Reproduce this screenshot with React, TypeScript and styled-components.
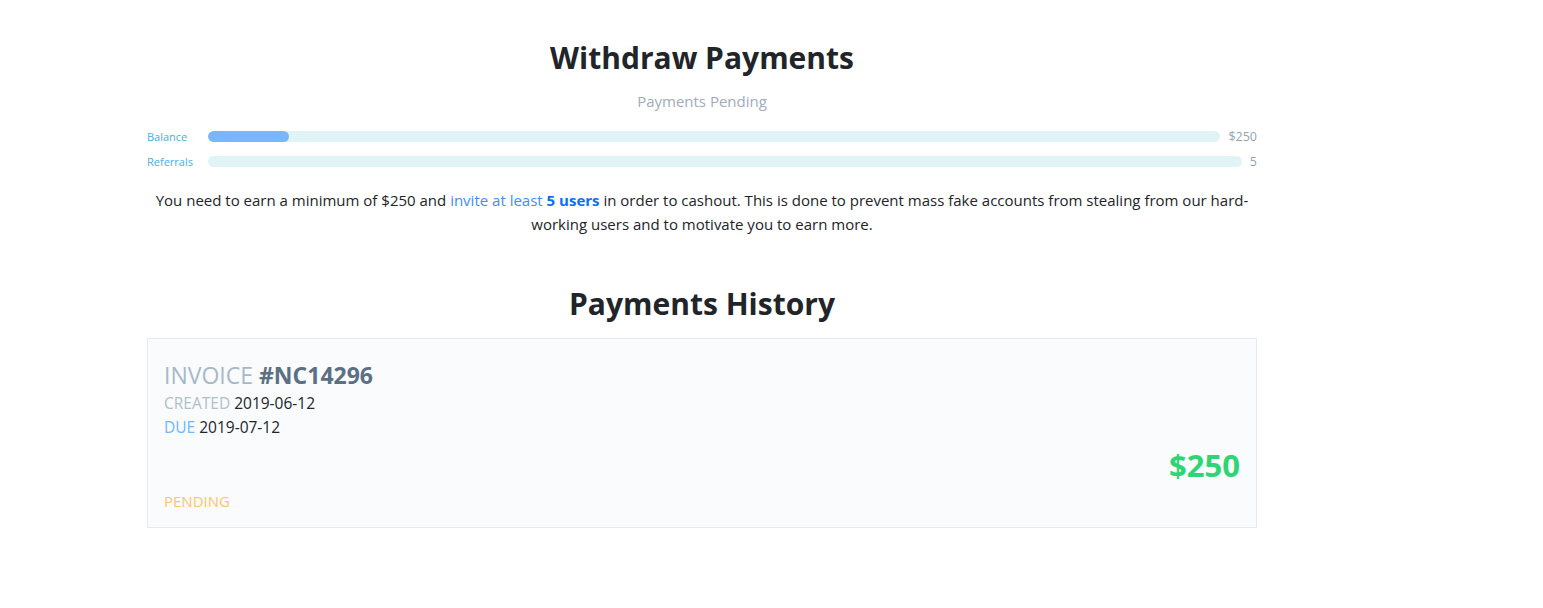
import React from "react";
import styled, { createGlobalStyle } from "styled-components";

const GlobalStyle = createGlobalStyle`
  body {
    margin: 0;
    background: #fff;
    font-family: "Open Sans", "Noto Sans", sans-serif;
    color: #212529;
  }
`;

const Page = styled.div`
  width: 1110px;
  padding: 38px 0 0 147px;
`;

const Title = styled.h2`
  margin: 0;
  text-align: center;
  font-size: 30px;
  font-weight: 700;
  line-height: 40px;
  color: #212529;
`;

const Subtitle = styled.div`
  margin-top: 12px;
  text-align: center;
  font-size: 15px;
  line-height: 22px;
  color: #a0abbb;
`;

const Bars = styled.div`
  margin-top: 16px;
  display: flex;
  flex-direction: column;
  gap: 9px;
`;

const BarRow = styled.div`
  display: flex;
  align-items: center;
  height: 16px;
`;

const BarLabel = styled.span`
  width: 61px;
  flex: none;
  font-size: 11px;
  color: #45afe3;
`;

const Track = styled.div`
  flex: 1;
  height: 11px;
  border-radius: 6px;
  background: #e0f3f7;
  overflow: hidden;
`;

const Fill = styled.div`
  height: 100%;
  border-radius: 6px;
  background: #7ab6ff;
`;

const BarValue = styled.span`
  margin-left: 8px;
  font-size: 12.5px;
  color: #92a3b3;
`;

const Note = styled.p`
  margin: 19px 0 0;
  text-align: center;
  font-size: 15px;
  line-height: 24px;
`;

const Link = styled.a`
  color: #3d8ef2;
  text-decoration: none;
`;

const Strong = styled.b`
  color: #0b6ff5;
  font-weight: 700;
`;

const SectionTitle = styled(Title)`
  margin-top: 48px;
`;

const Card = styled.div`
  margin-top: 14px;
  height: 190px;
  box-sizing: border-box;
  padding: 20px 16px 16px;
  border: 1px solid #e8eaed;
  background: #f9fbfd;
  display: flex;
  flex-direction: column;
`;

const InvoiceLine = styled.div`
  font-size: 23px;
  line-height: 32px;
  color: #a7b9c8;
`;

const InvoiceNo = styled.b`
  color: #5b7083;
  font-weight: 700;
`;

const MetaLine = styled.div<{ $tone: string }>`
  font-size: 15.5px;
  line-height: 24px;
  span {
    color: ${(p) => p.$tone};
  }
`;

const Amount = styled.div`
  margin-top: auto;
  text-align: right;
  font-size: 31px;
  font-weight: 700;
  line-height: 40px;
  color: #2fd574;
`;

const Status = styled.div`
  margin-top: 6px;
  font-size: 15px;
  line-height: 20px;
  color: #ffc46d;
`;

const bars = [
  { label: "Balance", pct: 8, value: "$250" },
  { label: "Referrals", pct: 0, value: "5" },
];

export default function App() {
  return (
    <>
      <GlobalStyle />
      <Page>
        <Title>Withdraw Payments</Title>
        <Subtitle>Payments Pending</Subtitle>
        <Bars>
          {bars.map((b) => (
            <BarRow key={b.label}>
              <BarLabel>{b.label}</BarLabel>
              <Track>
                <Fill style={{ width: `${b.pct}%` }} />
              </Track>
              <BarValue>{b.value}</BarValue>
            </BarRow>
          ))}
        </Bars>
        <Note>
          You need to earn a minimum of $250 and{" "}
          <Link href="#">invite at least</Link> <Strong>5 users</Strong> in
          order to cashout. This is done to prevent mass fake accounts from
          stealing from our hard-working users and to motivate you to earn more.
        </Note>
        <SectionTitle>Payments History</SectionTitle>
        <Card>
          <InvoiceLine>
            INVOICE <InvoiceNo>#NC14296</InvoiceNo>
          </InvoiceLine>
          <MetaLine $tone="#b0bfcc">
            <span>CREATED</span> 2019-06-12
          </MetaLine>
          <MetaLine $tone="#6db7ff">
            <span>DUE</span> 2019-07-12
          </MetaLine>
          <Amount>$250</Amount>
          <Status>PENDING</Status>
        </Card>
      </Page>
    </>
  );
}
